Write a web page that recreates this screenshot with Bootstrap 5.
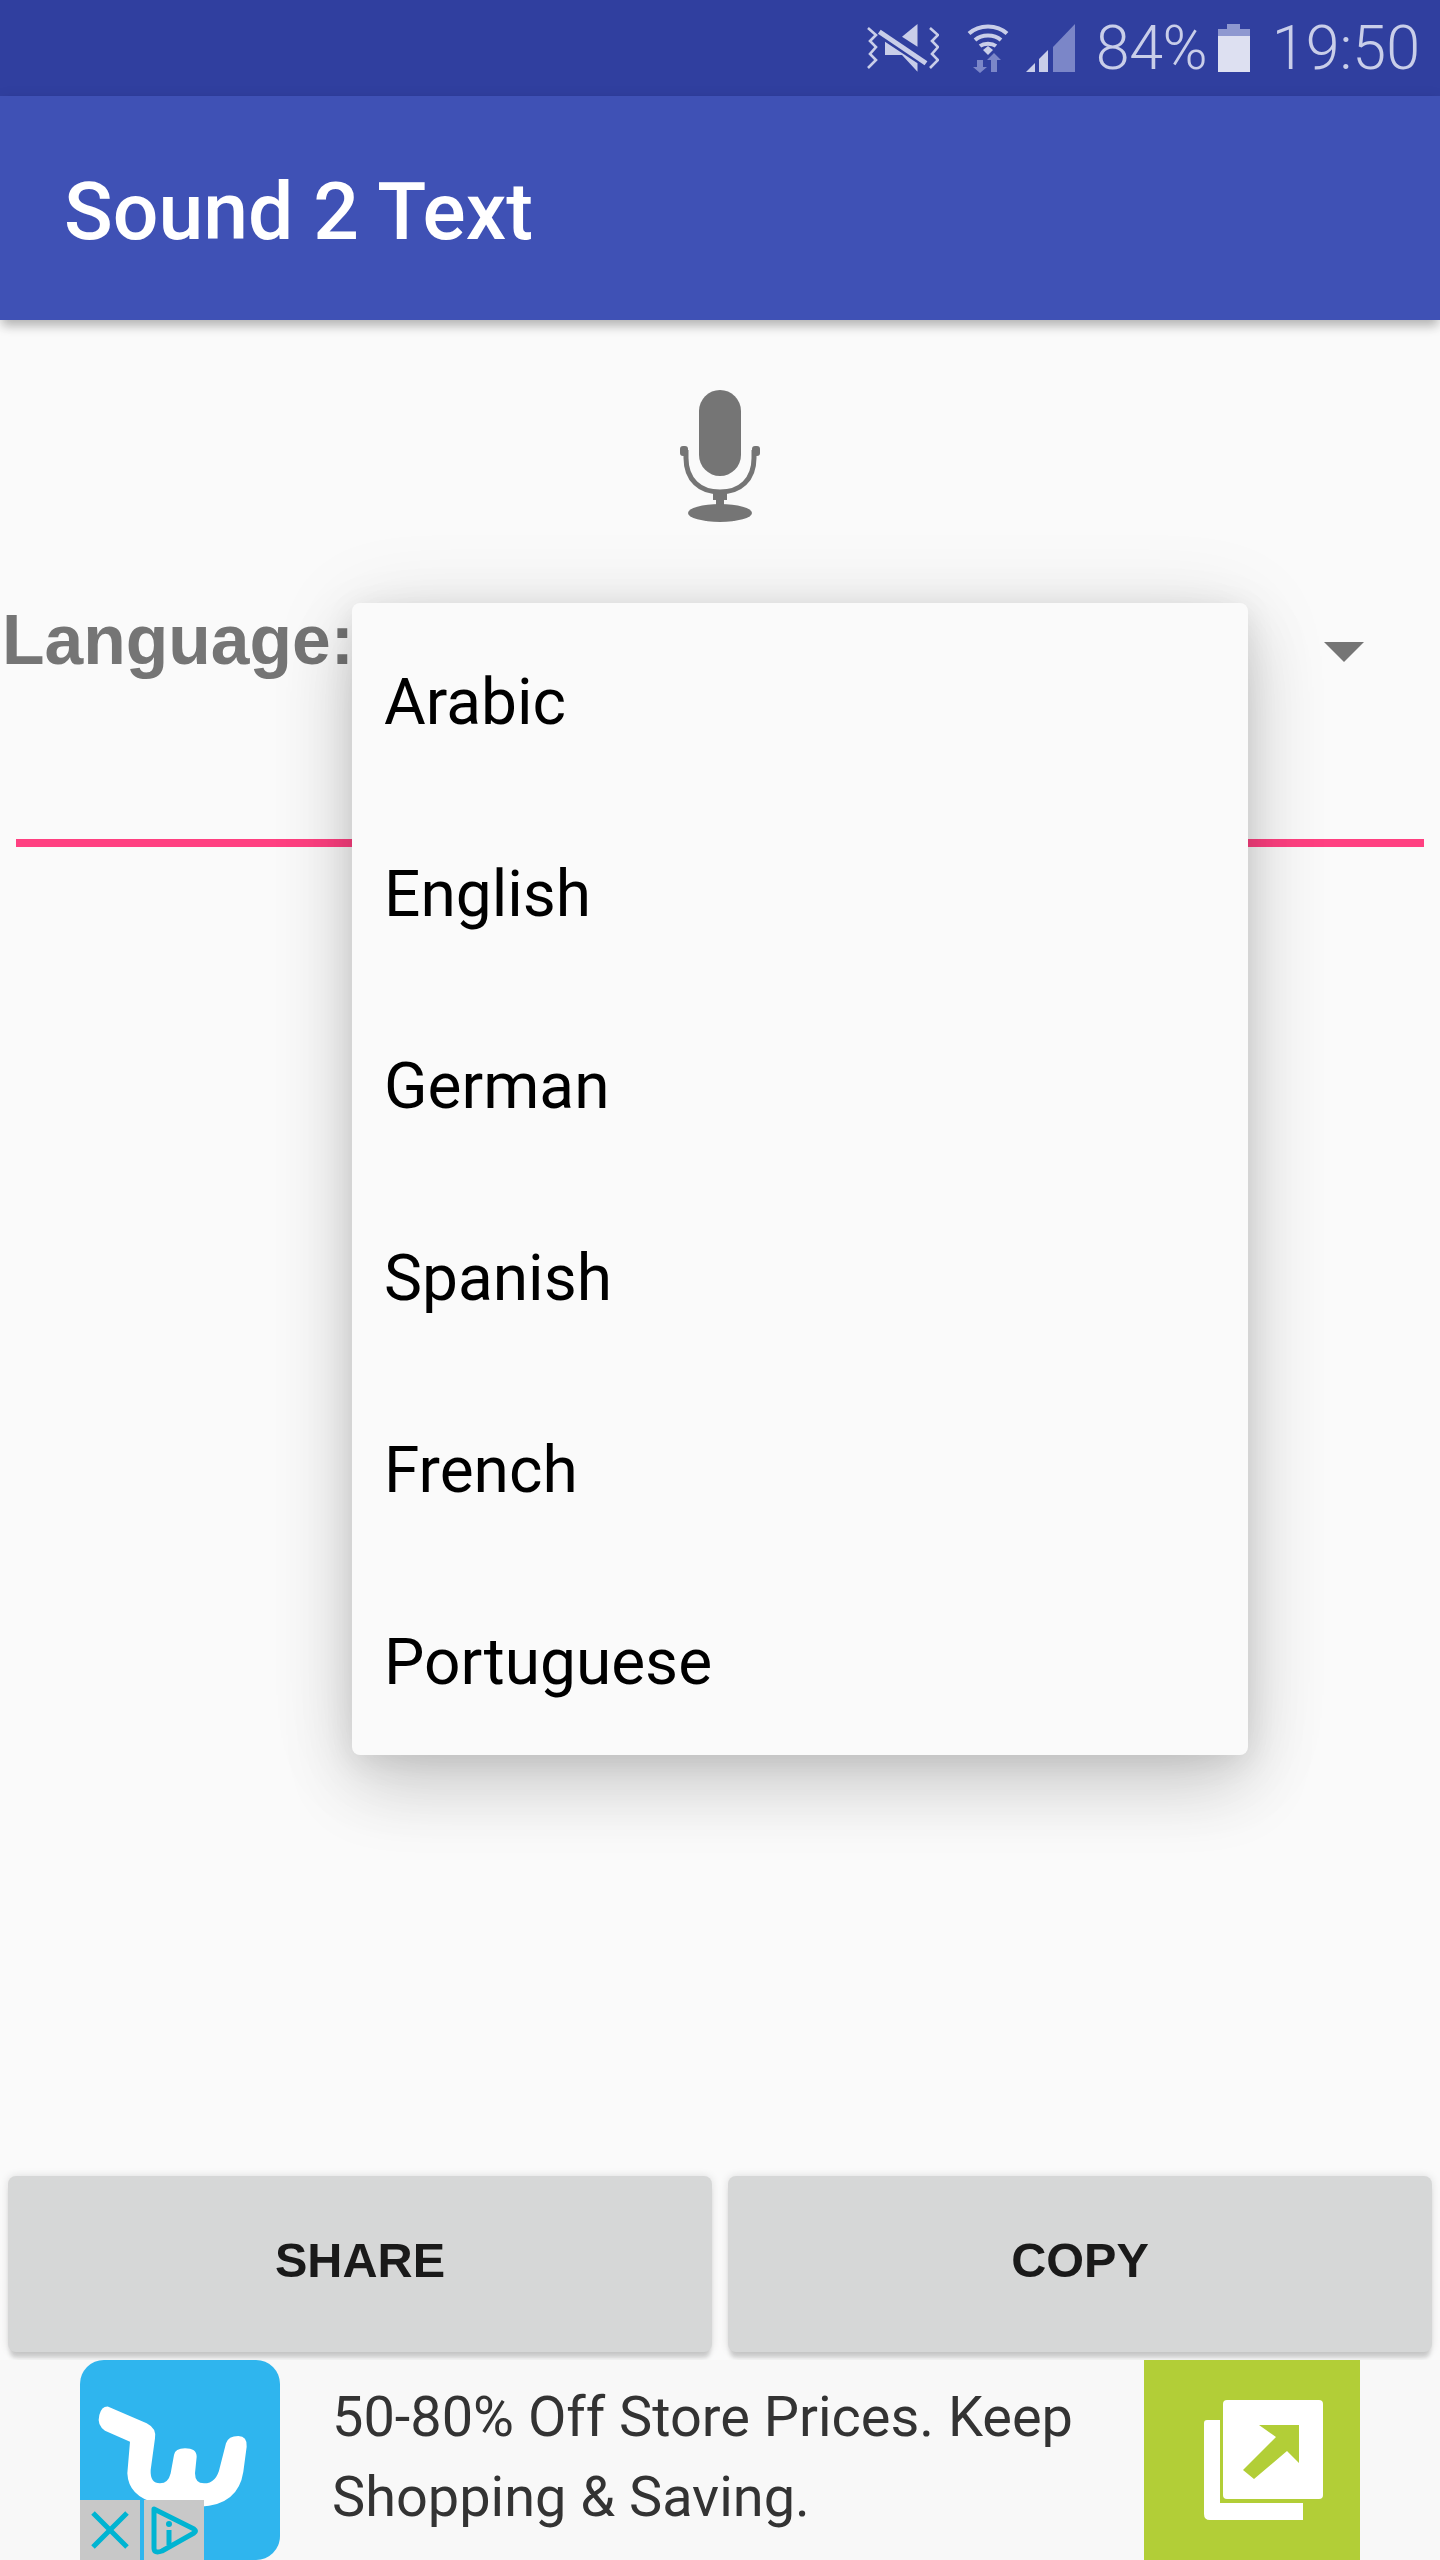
<!DOCTYPE html>
<html lang="en">
<head>
<meta charset="utf-8">
<title>Sound 2 Text</title>
<link href="https://cdn.jsdelivr.net/npm/bootstrap@5.3.0/dist/css/bootstrap.min.css" rel="stylesheet">
<style>
html,body{margin:0;background:#fafafa}
.phone{width:1440px;height:2560px;position:relative;overflow:hidden;font-family:Roboto,sans-serif;background:#fafafa}
.sbar{height:96px;background:#303f9f;color:#c9cee9;font-size:61px;font-weight:350;line-height:96px;padding-right:20px}
.sbar svg{display:block;flex:none}
.sbar-pct{margin-left:21px;width:108px;letter-spacing:-.5px}
.sbar-time{margin-left:22px}
.abar{height:224px;background:#3f51b5;color:#fff;padding:8px 0 0 64px;font-size:80.5px;font-weight:500;box-shadow:0 8px 10px -2px rgba(0,0,0,.24),0 2px 14px rgba(0,0,0,.08);position:relative;z-index:1}
.mainp{min-height:0}
.mic-wrap{padding-top:70px;height:283px}
.lang-row{height:236px;color:#757575;padding-left:2px}
.lang-lbl{font-family:"Liberation Sans",Arial,sans-serif;font-weight:700;font-size:69.6px;line-height:1;margin-top:3px}
.caret-s{width:0;height:0;border-left:20px solid transparent;border-right:20px solid transparent;border-top:20px solid #757575;margin:39px 76px 0 0}
.pink{height:8px;background:#ff4081;margin:0 16px}
.popup{position:absolute;left:352px;top:603px;width:896px;height:1152px;background:#fafafa;border-radius:8px;box-shadow:0 32px 72px rgba(0,0,0,.14),0 8px 88px rgba(0,0,0,.1),0 6px 30px rgba(0,0,0,.08);z-index:3}
.popup .list-group-item{height:192px;background:transparent;color:#000;font-size:64px;line-height:200px;padding:0 32px;border:0}
.btn-row{padding:0 8px 8px;gap:16px}
.btn-row .btn{flex:1 1 0;height:176px;background:#d6d7d7;border:0;border-radius:8px;color:#1a1a1a;font-family:"Liberation Sans",Arial,sans-serif;font-weight:700;font-size:48.6px;line-height:1;padding:0 0 7px;box-shadow:0 8px 4px -2px rgba(0,0,0,.16),0 0 8px rgba(0,0,0,.12);--bs-btn-hover-bg:#d6d7d7;--bs-btn-hover-color:#1a1a1a}
.adbar{height:200px;background:#f8f8f8;position:relative;z-index:2}
.ad-logo{margin-left:80px;width:200px;height:200px;position:relative;flex:none}
.ad-logo svg{display:block}
.ad-x{position:absolute;bottom:0;width:60px;height:60px;background:#c8c8c8}
.ad-x1{left:0}.ad-x2{left:64px}
.ad-txt{margin-left:52px;width:812px;font-size:55.9px;line-height:80px;color:#333;flex:none;padding-bottom:6px}
.ad-go{width:216px;height:200px;background:#b2ce37;flex:none;padding:40px 0 0 60px}
</style>
</head>
<body>
<div class="phone d-flex flex-column">
  <div class="sbar d-flex justify-content-end align-items-center flex-none">
    <svg width="72" height="48" viewBox="0 0 72 48" style="margin-right:28px">
      <g fill="#c9cee9">
        <polygon points="35,12.7 50.5,0 50.5,22.7"/>
        <polygon points="18,17.7 18,31 35,31 50.5,47.7 50.5,39.3"/>
      </g>
      <line x1="12.3" y1="7.7" x2="59" y2="39.3" stroke="#303f9f" stroke-width="8"/>
      <line x1="12.3" y1="7.7" x2="59" y2="39.3" stroke="#c9cee9" stroke-width="5"/>
      <g fill="none" stroke="#c9cee9" stroke-width="2.6">
        <polyline points="1,4 9,11 3,17 9,23 3,30 9,36 1,44"/>
        <polyline points="63,4 71,11 65,17 71,23 65,30 71,36 63,44"/>
      </g>
    </svg>
    <svg width="42" height="49" viewBox="0 0 42 49" style="margin-right:17px">
      <g fill="none" stroke="#c9cee9" stroke-width="4">
        <path d="M2 9.5C12 -0 30 -0 40 9.5"/>
        <path d="M8 16C15 10 27 10 34 16"/>
        <path d="M13 22C17 19 25 19 29 22"/>
      </g>
      <polygon points="16,26 21,22 26,26 21,31" fill="#c9cee9"/>
      <path d="M10 36h6v7h4l-7 6-7-6h4zM24 43v-7h-4l7-7 7 7h-4v12h-6z" fill="#7b86c8"/>
    </svg>
    <svg width="49" height="48" viewBox="0 0 49 48">
      <polygon points="27,23 49,0 49,48 27,48" fill="#7b86c8"/>
      <polygon points="0,48 9,39 9,48" fill="#c9cee9"/>
      <polygon points="13,35 22,26 22,48 13,48" fill="#c9cee9"/>
    </svg>
    <span class="sbar-pct">84%</span>
    <svg width="32" height="48" viewBox="0 0 32 48" style="margin-left:14px">
      <path d="M9 0h13v5h10v7H0V5h9z" fill="#8e98d0"/>
      <rect y="12" width="32" height="36" fill="#dde0f1"/>
    </svg>
    <span class="sbar-time">19:50</span>
  </div>
  <div class="abar d-flex align-items-center">Sound 2 Text</div>
  <div class="mainp flex-grow-1 d-flex flex-column">
    <div class="mic-wrap d-flex justify-content-center">
      <svg width="80" height="132" viewBox="0 0 80 132">
        <rect x="19" y="0" width="42" height="86" rx="21" fill="#757575"/>
        <path d="M6 60V68C6 90 20 102 40 102S74 90 74 68V60" fill="none" stroke="#757575" stroke-width="5"/>
        <rect x="0" y="56" width="8" height="10" rx="3" fill="#757575"/>
        <rect x="72" y="56" width="8" height="10" rx="3" fill="#757575"/>
        <path d="M33 100h14v10h-3v7h-8v-7h-3z" fill="#757575"/>
        <ellipse cx="40" cy="123" rx="32" ry="9" fill="#757575"/>
      </svg>
    </div>
    <div class="lang-row d-flex justify-content-between align-items-start">
      <span class="lang-lbl">Language:</span>
      <span class="caret-s"></span>
    </div>
    <div class="pink"></div>
    <div class="flex-grow-1"></div>
    <div class="btn-row d-flex">
      <button type="button" class="btn">SHARE</button>
      <button type="button" class="btn">COPY</button>
    </div>
  </div>
  <div class="adbar d-flex align-items-center">
    <div class="ad-logo">
      <svg width="200" height="200" viewBox="240 60 600 600">
        <rect x="240" y="60" width="600" height="600" rx="72" fill="#2fb5ee"/>
        <path d="M325 200L440 250Q470 265 465 295L452 390Q450 430 480 430Q505 430 512 400L522 345Q525 325 555 325Q590 325 590 350L585 400Q585 430 612 430Q650 430 660 380L678 310Q685 288 715 288Q742 288 740 320L730 395Q715 495 600 500L470 490Q385 470 382 400L390 305L315 272Q290 255 298 225Q305 198 325 200Z" fill="#fff"/>
      </svg>
      <div class="ad-x ad-x1">
        <svg width="60" height="60" viewBox="0 0 60 60"><path d="M13 13L47 47M47 13L13 47" stroke="#00b4d2" stroke-width="5" fill="none"/></svg>
      </div>
      <div class="ad-x ad-x2">
        <svg width="60" height="60" viewBox="0 0 60 60">
          <path d="M10 9L50 29Q53 31 50 33L18 51Q10 54 10 48Z" fill="none" stroke="#00b4d2" stroke-width="5" stroke-linejoin="round"/>
          <circle cx="25" cy="24" r="3" fill="#00b4d2"/>
          <path d="M25 30V45" stroke="#00b4d2" stroke-width="5"/>
        </svg>
      </div>
    </div>
    <div class="ad-txt">50-80% Off Store Prices. Keep Shopping &amp; Saving.</div>
    <div class="ad-go">
      <svg width="120" height="120" viewBox="0 0 120 120" class="d-block">
        <path d="M3 20H16V103H99V120H6Q0 120 0 114V23Q0 20 3 20Z" fill="#fff"/>
        <rect x="19" y="0" width="100" height="99" rx="4" fill="#fff"/>
        <path d="M55 25H95V63L83 51L50 79L39 70L72 37Z" fill="#b2ce37"/>
      </svg>
    </div>
  </div>
  <div class="popup list-group">
    <div class="list-group-item">Arabic</div>
    <div class="list-group-item">English</div>
    <div class="list-group-item">German</div>
    <div class="list-group-item">Spanish</div>
    <div class="list-group-item">French</div>
    <div class="list-group-item">Portuguese</div>
  </div>
</div>
<script src="https://cdn.jsdelivr.net/npm/bootstrap@5.3.0/dist/js/bootstrap.bundle.min.js"></script>
</body>
</html>
